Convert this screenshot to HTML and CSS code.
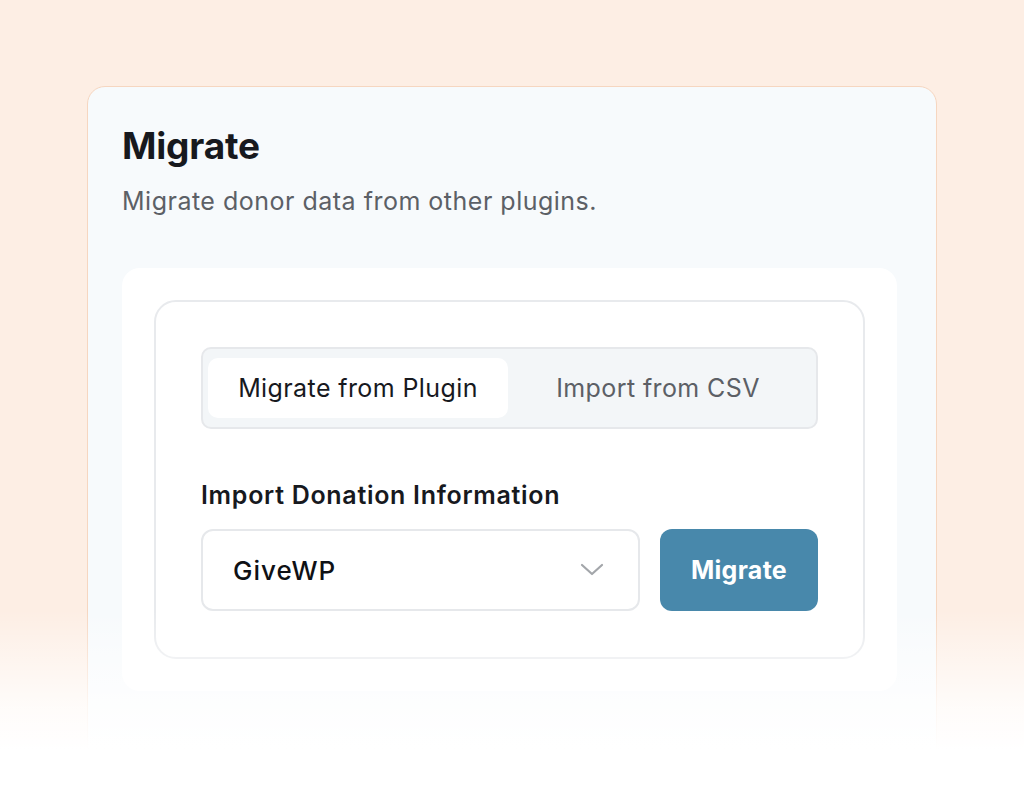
FILE: index.html
```html
<!DOCTYPE html>
<html lang="en">
<head>
    <meta charset="UTF-8">
    <meta name="viewport" content="width=device-width, initial-scale=1.0">
    <title>Migrate</title>
    <link rel="stylesheet" href="styles.css">
</head>
<body>

<div class="page">
    <div class="card">
        <h1 class="title">Migrate</h1>
        <p class="subtitle">Migrate donor data from other plugins.</p>

        <div class="panel">
            <div class="box">
                <div class="tabs">
                    <div class="tab active">Migrate from Plugin</div>
                    <div class="tab">Import from CSV</div>
                </div>

                <div class="field-label">Import Donation Information</div>
                <div class="field-row">
                    <div class="select">
                        <span>GiveWP</span>
                        <svg class="chevron" width="24" height="14" viewBox="0 0 24 14">
                            <path d="M2 2 L12 11 L22 2" fill="none" stroke="#a3a6aa" stroke-width="2.2" stroke-linecap="round" stroke-linejoin="round"/>
                        </svg>
                    </div>
                    <button class="migrate-btn">Migrate</button>
                </div>
            </div>
        </div>
    </div>
    <div class="fade"></div>
</div>

</body>
</html>
```

FILE: styles.css
```css
body {
    margin: 0;
    font-family: Inter, "Noto Sans", sans-serif;
    background-color: #fdeee4;
    color: #17191e;
}
.page {
    position: relative;
    height: 785px;
    overflow: hidden;
    padding-top: 86px;
    box-sizing: border-box;
}
.card {
    margin-left: 87px;
    width: 850px;
    height: 760px;
    box-sizing: border-box;
    padding: 24px 39px 0 34px;
    background-color: #f7fafc;
    border: 1px solid #f6d6c0;
    border-radius: 18px;
}
.title {
    margin: 0;
    font-size: 37px;
    font-weight: 700;
    letter-spacing: -0.2px;
    line-height: 70px;
}
.subtitle {
    margin: 0;
    font-size: 25px;
    letter-spacing: 0.5px;
    color: #5c6066;
    line-height: 40px;
}
.panel {
    margin-top: 47px;
    background-color: #ffffff;
    border-radius: 18px;
    padding: 32px;
}
.box {
    border: 2px solid #e8eaed;
    border-radius: 22px;
    padding: 45px 45px 46px 45px;
}
.tabs {
    display: flex;
    background-color: #f3f6f8;
    border: 2px solid #e6e8eb;
    border-radius: 10px;
    padding: 9px 5px;
    height: 60px;
}
.tab {
    width: 300px;
    display: flex;
    align-items: center;
    justify-content: center;
    font-size: 25px;
    letter-spacing: 0.4px;
    color: #5c6066;
    border-radius: 10px;
}
.tab.active {
    background-color: #ffffff;
    color: #17191e;
}
.field-label {
    margin-top: 49px;
    font-size: 25px;
    font-weight: 600;
    letter-spacing: 0.7px;
    line-height: 34px;
}
.field-row {
    display: flex;
    gap: 20px;
    margin-top: 17px;
}
.select {
    flex: 1;
    height: 82px;
    box-sizing: border-box;
    border: 2px solid #e6e8eb;
    border-radius: 12px;
    display: flex;
    align-items: center;
    justify-content: space-between;
    padding: 0 34px 0 30px;
    font-size: 26px;
    font-weight: 500;
    letter-spacing: 1px;
    color: #0f1115;
}
.migrate-btn {
    width: 158px;
    height: 82px;
    border: none;
    border-radius: 12px;
    background-color: #4888ab;
    color: #ffffff;
    font-family: inherit;
    font-size: 25px;
    font-weight: 700;
    letter-spacing: 0.3px;
}
.fade {
    position: absolute;
    left: 0;
    right: 0;
    bottom: 0;
    height: 175px;
    background: linear-gradient(to bottom, rgba(255, 255, 255, 0) 0%, rgba(255, 255, 255, 0.8) 55%, #ffffff 80%);
}
```
